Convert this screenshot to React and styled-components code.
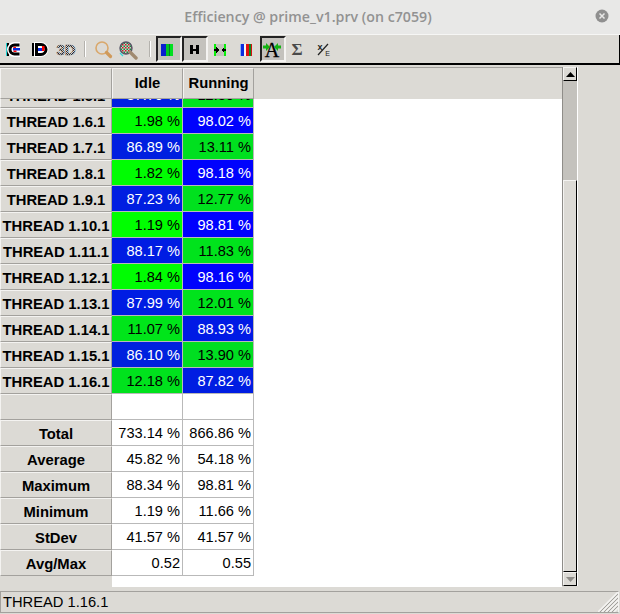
import React from 'react';
import styled, { createGlobalStyle } from 'styled-components';

const GlobalStyle = createGlobalStyle`
  html, body { margin: 0; padding: 0; background: #dcdad5; }
  #root { width: 620px; height: 614px; overflow: hidden; }
`;

const threads = [
  ['THREAD 1.5.1', 87.7, 12.3],
  ['THREAD 1.6.1', 1.98, 98.02],
  ['THREAD 1.7.1', 86.89, 13.11],
  ['THREAD 1.8.1', 1.82, 98.18],
  ['THREAD 1.9.1', 87.23, 12.77],
  ['THREAD 1.10.1', 1.19, 98.81],
  ['THREAD 1.11.1', 88.17, 11.83],
  ['THREAD 1.12.1', 1.84, 98.16],
  ['THREAD 1.13.1', 87.99, 12.01],
  ['THREAD 1.14.1', 11.07, 88.93],
  ['THREAD 1.15.1', 86.1, 13.9],
  ['THREAD 1.16.1', 12.18, 87.82],
];

const stats = [
  ['Total', '733.14 %', '866.86 %'],
  ['Average', '45.82 %', '54.18 %'],
  ['Maximum', '88.34 %', '98.81 %'],
  ['Minimum', '1.19 %', '11.66 %'],
  ['StDev', '41.57 %', '41.57 %'],
  ['Avg/Max', '0.52', '0.55'],
];

const heat = (v) => {
  const t = (v - 1.19) / 97.62;
  return `rgb(0, ${Math.round(255 * (1 - t))}, ${Math.round(255 * t)})`;
};

const Window = styled.div`
  width: 620px;
  height: 614px;
  display: flex;
  flex-direction: column;
  background: #dcdad5;
  font-family: "Liberation Sans", Arial, sans-serif;
  color: #000;
`;

const TitleBar = styled.div`
  height: 34px;
  flex: none;
  box-sizing: content-box;
  display: flex;
  align-items: center;
  justify-content: center;
  position: relative;
  background: #e8e8e7;
  border-bottom: 1px solid #f6f6f5;
  font-family: "Open Sans", sans-serif;
  font-weight: 600;
  font-size: 14.2px;
  color: #929292;
  padding-right: 4px;
  line-height: 30px;
`;

const CloseDot = styled.svg`
  position: absolute;
  right: 11px;
  top: 9px;
`;

const Toolbar = styled.div`
  height: 28px;
  flex: none;
  display: flex;
  align-items: center;
  padding-left: 1px;
  background: #dcdad5;
  border-bottom: 2px solid #000;
  border-right: 1px solid #000;
`;

const ToolButton = styled.div`
  width: 26px;
  height: 26px;
  box-sizing: border-box;
  display: flex;
  align-items: center;
  justify-content: center;
  ${(p) => p.$on && `
    background: #c4c2bd;
    border: 2px solid;
    border-color: #222 #f4f3f1 #f4f3f1 #222;
  `}
`;

const Separator = styled.div`
  width: 2px;
  height: 16px;
  margin: 0 5px 0 ${(p) => p.$left}px;
  background: #b4b2ad;
  border-right: 1px solid #fff;
  box-sizing: border-box;
`;

const Content = styled.div`
  height: 526px;
  flex: none;
  display: flex;
  box-sizing: border-box;
  padding: 2px 0 4px;
`;

const TableArea = styled.div`
  width: 562px;
  display: flex;
  flex-direction: column;
`;

const Row = styled.div`
  display: grid;
  grid-template-columns: 112px 71px 71px;
  height: 26px;
  box-sizing: border-box;
`;

const HeaderRow = styled(Row)`
  height: 32px;
  flex: none;
  border-top: 1px solid #a3a19d;
  background: #dcdad5;
`;

const HeaderCell = styled.div`
  box-sizing: border-box;
  display: flex;
  align-items: center;
  justify-content: center;
  font-weight: bold;
  font-size: 14.8px;
  border-right: 1px solid #a3a19d;
  border-bottom: 1px solid #a3a19d;
  border-top: 1px solid #f4f3f1;
  border-left: 1px solid #f4f3f1;
`;

const ColumnTitle = styled(HeaderCell)`
  padding-bottom: 2px;
`;

const Body = styled.div`
  flex: 1;
  min-height: 0;
  overflow: hidden;
  background: linear-gradient(to right, #dcdad5 112px, #fff 112px);
`;

const Rows = styled.div`
  margin-top: -17px;
`;

const RowLabel = styled(HeaderCell)`
  padding-top: 1px;
  white-space: nowrap;
  overflow: hidden;
`;

const ValueCell = styled.div`
  box-sizing: border-box;
  display: flex;
  align-items: center;
  justify-content: flex-end;
  padding-right: 2px;
  font-size: 14.6px;
  white-space: nowrap;
  background: ${(p) => p.$bg || '#fff'};
  color: ${(p) => p.$fg || '#000'};
  border-right: 1px solid #b9b9b9;
  border-bottom: 1px solid #b9b9b9;
`;

const ScrollBar = styled.div`
  width: 14px;
  flex: none;
  display: flex;
  flex-direction: column;
  background: #c4c2bd;
  border-left: 1px solid #8f8d89;
  border-right: 1px solid #fff;
  margin-bottom: 1px;
`;

const ArrowButton = styled.div`
  height: 14px;
  flex: none;
  display: flex;
  align-items: center;
  justify-content: center;
  background: #dcdad5;
  border: 1px solid;
  border-color: #f4f3f1 #000 #000 #f4f3f1;
  box-sizing: border-box;
`;

const Trough = styled.div`
  flex: 1;
  display: flex;
  flex-direction: column;
  padding-top: 99px;
`;

const Thumb = styled.div`
  flex: 1;
  background: #dcdad5;
  border: 1px solid;
  border-color: #f4f3f1 #000 #000 #f4f3f1;
  box-sizing: border-box;
`;

const StatusBar = styled.div`
  height: 22px;
  flex: none;
  box-sizing: border-box;
  display: flex;
  align-items: center;
  padding-left: 2px;
  position: relative;
  font-size: 14.7px;
  background: #dcdad5;
  border: 1px solid;
  border-color: #a3a19d #f4f3f1 #a3a19d #a3a19d;
  margin-right: 1px;
`;

const Grip = styled.svg`
  position: absolute;
  right: 0;
  bottom: 0;
`;

const Ico = ({ children }) => (
  <svg width="22" height="22" viewBox="0 0 22 22" shapeRendering="crispEdges">{children}</svg>
);

const CIcon = () => (
  <svg width="22" height="22" viewBox="0 0 22 22">
    <rect x="3" y="5" width="1" height="13" fill="#22d0d0" />
    <rect x="4" y="5" width="2" height="13" fill="#000" />
    <path d="M17 6.500H11.500a5 5 0 0 0 0 10H17" fill="#fff" stroke="#fff" strokeWidth="5" />
    <path d="M16.500 7H11.500a4.500 4.500 0 0 0 0 9H16.500" fill="none" stroke="#000" strokeWidth="3" />
    <path d="M10 10a2 2 0 0 1 3-1v1.500z" fill="#f00" />
    <rect x="10" y="10" width="7" height="2.500" fill="#0a2be0" />
    <rect x="10.500" y="12.500" width="3" height="1.500" fill="#f00" />
  </svg>
);

const DIcon = () => (
  <svg width="22" height="22" viewBox="0 0 22 22">
    <rect x="3" y="5" width="2" height="13" fill="#000" />
    <path d="M7.500 6.500H12a5 5 0 0 1 0 10H7.500z" fill="#fff" stroke="#fff" strokeWidth="5" />
    <path d="M7.500 6.500H12a5 5 0 0 1 0 10H7.500z" fill="#fff" stroke="#000" strokeWidth="3" />
    <rect x="9" y="10" width="4" height="3" fill="#0a2be0" />
    <rect x="13" y="8" width="2.500" height="5" fill="#f00" />
  </svg>
);

const ThreeDIcon = () => (
  <Ico>
    <defs>
      <pattern id="dith" width="2" height="2" patternUnits="userSpaceOnUse">
        <rect width="2" height="2" fill="#e4e4e4" />
        <rect width="1" height="1" fill="#222" />
        <rect x="1" y="1" width="1" height="1" fill="#222" />
      </pattern>
    </defs>
    <text x="11" y="17" textAnchor="middle" fontFamily="Liberation Sans, sans-serif" fontWeight="bold" fontSize="15" fill="url(#dith)" stroke="#555" strokeWidth="0.4">3D</text>
  </Ico>
);

const GlassIcon = () => (
  <svg width="22" height="22" viewBox="0 0 22 22">
    <circle cx="9" cy="10" r="6" fill="none" stroke="#d9a86c" strokeWidth="1.6" />
    <path d="M13.500 14.500l4 4" stroke="#d09a5a" strokeWidth="3.200" strokeLinecap="round" />
  </svg>
);

const GlassColorIcon = () => (
  <svg width="22" height="22" viewBox="0 0 22 22">
    <defs>
      <pattern id="chk" width="3" height="3" patternUnits="userSpaceOnUse">
        <rect width="3" height="3" fill="#c9c9c9" />
        <rect width="1.500" height="1.500" fill="#c22" />
        <rect x="1.500" y="1.500" width="1.500" height="1.500" fill="#1d8a3a" />
      </pattern>
    </defs>
    <circle cx="7" cy="10" r="6" fill="url(#chk)" stroke="#556" strokeWidth="1.400" />
    <path d="M11 14l6 6" stroke="#a08a70" strokeWidth="3.400" strokeLinecap="round" />
    <path d="M1 15l3 3" stroke="#33d6d6" strokeWidth="1.200" />
  </svg>
);

const HistIcon = () => (
  <Ico>
    <rect x="3" y="6" width="5" height="12" fill="#0a1fd0" />
    <rect x="8" y="6" width="3" height="12" fill="#00c820" />
    <rect x="11" y="6" width="1" height="12" fill="#0a7a30" />
    <rect x="12" y="6" width="3" height="12" fill="#00e020" />
  </Ico>
);

const HIcon = () => (
  <Ico>
    <path d="M6 7h3v4h3V7h3v9h-3v-3H9v3H6z" fill="#000" />
  </Ico>
);

const ArrowsIcon = () => (
  <Ico>
    <rect x="4" y="6" width="2" height="12" fill="#0bee0b" />
    <rect x="14" y="6" width="2" height="12" fill="#0bee0b" />
    <rect x="6" y="6" width="8" height="12" fill="#c4c2bd" />
    <path d="M4 11h2V9l3 3-3 3v-2H4zM16 11h-2V9l-3 3 3 3v-2h2z" fill="#000" />
  </Ico>
);

const BarsIcon = () => (
  <Ico>
    <rect x="4" y="6" width="1" height="12" fill="#8db4f0" />
    <rect x="5" y="6" width="3" height="12" fill="#0a2be0" />
    <rect x="8" y="6" width="2" height="12" fill="#f4f4f4" />
    <rect x="10" y="6" width="3" height="12" fill="#e01010" />
    <rect x="13" y="6" width="2" height="12" fill="#0a8a20" />
    <rect x="15" y="6" width="1" height="12" fill="#d81010" />
  </Ico>
);

const AIcon = () => (
  <svg width="22" height="22" viewBox="0 0 22 22">
    <text x="10" y="19" textAnchor="middle" fontFamily="Liberation Serif, serif" fontSize="20" fill="#000" stroke="#000" strokeWidth="0.3">A</text>
    <path d="M8 9L4 5v2.500H1v3h3V13zM12 9l4-4v2.500h3v3h-3V13z" fill="#12b312" />
  </svg>
);

const SigmaIcon = () => (
  <svg width="22" height="22" viewBox="0 0 22 22">
    <text x="9" y="17" textAnchor="middle" fontFamily="Liberation Serif, serif" fontWeight="bold" fontSize="17" fill="#4a4a4a">Σ</text>
  </svg>
);

const RatioIcon = () => (
  <svg width="22" height="22" viewBox="0 0 22 22">
    <text x="6" y="12" textAnchor="middle" fontFamily="Liberation Sans, sans-serif" fontWeight="bold" fontSize="9" fill="#222">x</text>
    <path d="M4 17L14 6" stroke="#222" strokeWidth="1.200" />
    <text x="13.500" y="18" textAnchor="middle" fontFamily="Liberation Sans, sans-serif" fontSize="7" fill="#222">E</text>
  </svg>
);

const fmt = (v) => `${v.toFixed(2)} %`;

const App = () => {
  return (
    <Window>
      <GlobalStyle />
      <TitleBar>
        Efficiency @ prime_v1.prv (on c7059)
        <CloseDot width="14" height="14" viewBox="0 0 14 14">
          <circle cx="7" cy="7" r="6.500" fill="#8f8f8f" />
          <path d="M4.500 4.500l5 5M9.500 4.500l-5 5" stroke="#e8e8e7" strokeWidth="1.500" />
        </CloseDot>
      </TitleBar>
      <Toolbar>
        <ToolButton><CIcon /></ToolButton>
        <ToolButton><DIcon /></ToolButton>
        <ToolButton><ThreeDIcon /></ToolButton>
        <Separator $left={5} />
        <ToolButton><GlassIcon /></ToolButton>
        <ToolButton><GlassColorIcon /></ToolButton>
        <Separator $left={6} />
        <ToolButton $on><HistIcon /></ToolButton>
        <ToolButton $on><HIcon /></ToolButton>
        <ToolButton><ArrowsIcon /></ToolButton>
        <ToolButton><BarsIcon /></ToolButton>
        <ToolButton $on><AIcon /></ToolButton>
        <ToolButton><SigmaIcon /></ToolButton>
        <ToolButton><RatioIcon /></ToolButton>
      </Toolbar>
      <Content>
        <TableArea>
          <HeaderRow>
            <HeaderCell />
            <ColumnTitle>Idle</ColumnTitle>
            <ColumnTitle>Running</ColumnTitle>
          </HeaderRow>
          <Body>
            <Rows>
              {threads.map(([name, idle, running]) => (
                <Row key={name}>
                  <RowLabel>{name}</RowLabel>
                  <ValueCell $bg={heat(idle)} $fg={idle > 50 ? '#fff' : '#000'}>{fmt(idle)}</ValueCell>
                  <ValueCell $bg={heat(running)} $fg={running > 50 ? '#fff' : '#000'}>{fmt(running)}</ValueCell>
                </Row>
              ))}
              <Row>
                <RowLabel />
                <ValueCell />
                <ValueCell />
              </Row>
              {stats.map(([name, idle, running]) => (
                <Row key={name}>
                  <RowLabel>{name}</RowLabel>
                  <ValueCell>{idle}</ValueCell>
                  <ValueCell>{running}</ValueCell>
                </Row>
              ))}
            </Rows>
          </Body>
        </TableArea>
        <ScrollBar>
          <ArrowButton>
            <svg width="9" height="5" viewBox="0 0 9 5"><path d="M4.500 0L9 5H0z" fill="#000" /></svg>
          </ArrowButton>
          <Trough><Thumb /></Trough>
          <ArrowButton>
            <svg width="9" height="5" viewBox="0 0 9 5"><path d="M0 0h9L4.500 5z" fill="#8f8d89" /></svg>
          </ArrowButton>
        </ScrollBar>
      </Content>
      <StatusBar>
        THREAD 1.16.1
        <Grip width="20" height="20" viewBox="0 0 20 20">
          <path d="M20 0L0 20M20 4L4 20M20 8L8 20M20 12L12 20M20 16L16 20" stroke="#f4f3f1" strokeWidth="1.500" />
          <path d="M20 2L2 20M20 6L6 20M20 10L10 20M20 14L14 20" stroke="#a3a19d" strokeWidth="1" />
        </Grip>
      </StatusBar>
    </Window>
  );
};

export default App;
